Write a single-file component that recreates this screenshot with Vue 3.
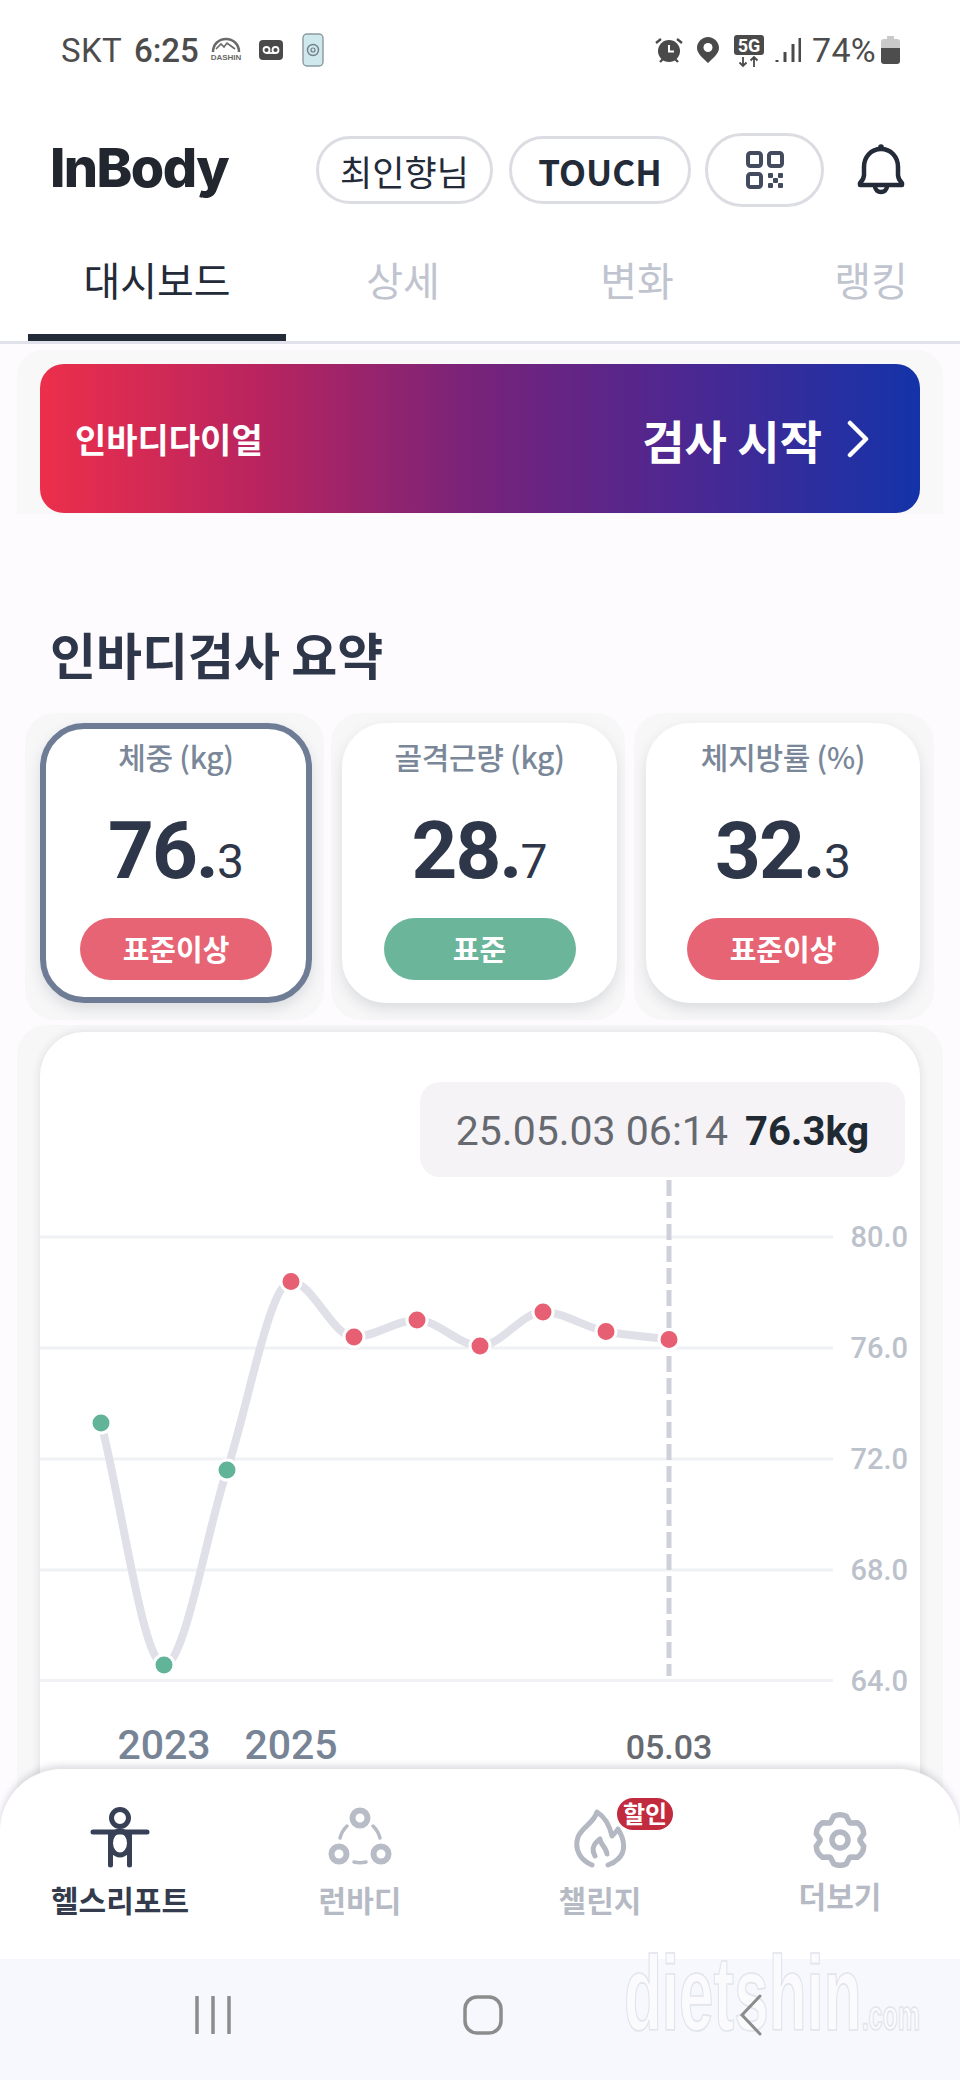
<script setup>
const pts = [
  [101, 1423, 'g'], [164, 1665, 'g'], [227, 1470, 'g'], [291, 1281.5, 'r'], [354, 1337, 'r'],
  [417, 1320, 'r'], [480, 1346, 'r'], [543, 1312, 'r'], [606, 1331.5, 'r'], [669, 1339.5, 'r']
]
function monotone(p) {
  const n = p.length
  const s = []
  for (let i = 0; i < n - 1; i++) s.push((p[i + 1][1] - p[i][1]) / (p[i + 1][0] - p[i][0]))
  const t = [s[0]]
  for (let i = 1; i < n - 1; i++) {
    t.push(s[i - 1] * s[i] <= 0 ? 0 : (2 * s[i - 1] * s[i]) / (s[i - 1] + s[i]))
  }
  t.push(s[n - 2])
  let d = `M${p[0][0]} ${p[0][1]}`
  for (let i = 0; i < n - 1; i++) {
    const h = (p[i + 1][0] - p[i][0]) / 3
    d += ` C${p[i][0] + h} ${p[i][1] + t[i] * h} ${p[i + 1][0] - h} ${p[i + 1][1] - t[i + 1] * h} ${p[i + 1][0]} ${p[i + 1][1]}`
  }
  return d
}
const linePath = monotone(pts)
const grid = [[1237, '80.0'], [1348, '76.0'], [1459, '72.0'], [1570, '68.0'], [1680.5, '64.0']]
const cards = [
  { label: '체중 (kg)', a: '76.', b: '3', state: '표준이상', tone: 'over', on: true },
  { label: '골격근량 (kg)', a: '28.', b: '7', state: '표준', tone: 'ok', on: false },
  { label: '체지방률 (%)', a: '32.', b: '3', state: '표준이상', tone: 'over', on: false }
]
const gear = (() => {
  const cx = 32, cy = 33
  let d = ''
  for (let i = 0; i < 6; i++) {
    const a = (i * 60 - 90) * Math.PI / 180
    const P = (r, o) => {
      const b = a + o * Math.PI / 180
      return `${(cx + r * Math.cos(b)).toFixed(1)} ${(cy + r * Math.sin(b)).toFixed(1)}`
    }
    d += `${i ? 'L' : 'M'}${P(20, -28)} L${P(24.5, -15)} Q${P(27, 0)} ${P(24.5, 15)} L${P(20, 28)} `
  }
  return d + 'Z'
})()
</script>

<template>
  <div class="page">
    <div class="status">
      <span class="carrier">SKT</span>
      <span class="clock">6:25</span>
      <svg class="st-dashin" width="32" height="26" viewBox="0 0 32 26">
        <path d="M3 15C3 7 9 2 16 2s13 5 13 13" fill="none" stroke="#6a6a6a" stroke-width="2.5"/>
        <path d="M6 12l5-5 3 3 3-4 4 3 4 3" fill="none" stroke="#6a6a6a" stroke-width="1.6"/>
        <text x="16" y="23" text-anchor="middle" class="st-dashin-t">DASHIN</text>
      </svg>
      <svg class="st-vm" width="24" height="20" viewBox="0 0 24 20">
        <rect width="24" height="20" rx="4" fill="#4a4a4a"/>
        <circle cx="7.5" cy="10" r="3" fill="none" stroke="#fff" stroke-width="1.8"/>
        <circle cx="16.5" cy="10" r="3" fill="none" stroke="#fff" stroke-width="1.8"/>
        <path d="M7.5 13h9" stroke="#fff" stroke-width="1.8"/>
      </svg>
      <svg class="st-phone" width="22" height="34" viewBox="0 0 22 34">
        <rect x="1" y="1" width="20" height="32" rx="4" fill="#cfe8ee" stroke="#8a9a9e" stroke-width="1.4"/>
        <circle cx="11" cy="17" r="5.5" fill="none" stroke="#6f8186" stroke-width="1.4"/>
        <circle cx="11" cy="17" r="2" fill="none" stroke="#6f8186" stroke-width="1.2"/>
      </svg>
      <span class="st-gap"></span>
      <svg width="28" height="27" viewBox="0 0 28 27">
        <circle cx="14" cy="14" r="11" fill="#4a4a4a"/>
        <path d="M14 8v6.5h5" fill="none" stroke="#fff" stroke-width="2"/>
        <path d="M1 6l5-4M27 6l-5-4M5 25l3-3M23 25l-3-3" stroke="#4a4a4a" stroke-width="2.4"/>
      </svg>
      <svg class="st-pin" width="22" height="26" viewBox="0 0 22 26">
        <path d="M11 0C5 0 0 5 0 11c0 6 7 11 11 15 4-4 11-9 11-15C22 5 17 0 11 0z" fill="#4a4a4a"/>
        <circle cx="11" cy="10.5" r="4.5" fill="#fff"/>
      </svg>
      <svg class="st-5g" width="30" height="33" viewBox="0 0 30 33">
        <rect width="30" height="20" rx="3" fill="#4a4a4a"/>
        <text x="15" y="16.5" text-anchor="middle" class="st-5g-t">5G</text>
        <path d="M9 22v9M5.5 27.5L9 31l3.500-3.500M20 32v-10M16.500 25.500L20 22l3.500 3.500" fill="none" stroke="#4a4a4a" stroke-width="1.8"/>
      </svg>
      <svg class="st-sig" width="26" height="26" viewBox="0 0 26 26">
        <path d="M2 23v2M10 15v10M18 7v18M25 1v24" stroke="#4a4a4a" stroke-width="3"/>
      </svg>
      <span class="batt-text">74%</span>
      <svg class="st-bat" width="19" height="28" viewBox="0 0 19 28">
        <path d="M6 0h7v3h3a3 3 0 0 1 3 3v8H0V6a3 3 0 0 1 3-3h3z" fill="#c9c9c9"/>
        <path d="M0 12h19v13a3 3 0 0 1-3 3H3a3 3 0 0 1-3-3z" fill="#4d4d4d"/>
      </svg>
    </div>

    <header class="head">
      <span class="logo">InBody</span>
      <span class="pill name">최인향님</span>
      <span class="pill touch">TOUCH</span>
      <span class="pill qr">
        <svg width="38" height="38" viewBox="0 0 38 38" fill="none" stroke="#434b5f" stroke-width="4">
          <rect x="2" y="2" width="13" height="13" rx="2.500"/>
          <rect x="23" y="2" width="13" height="13" rx="2.500"/>
          <rect x="2" y="23" width="13" height="13" rx="2.500"/>
          <g fill="#434b5f" stroke="none">
            <rect x="22" y="22" width="5" height="5" rx="1"/><rect x="32" y="22" width="5" height="5" rx="1"/>
            <rect x="27" y="27" width="5" height="5" rx="1"/>
            <rect x="22" y="32" width="5" height="5" rx="1"/><rect x="32" y="32" width="5" height="5" rx="1"/>
          </g>
        </svg>
      </span>
      <svg class="bell" width="48" height="54" viewBox="0 0 48 54" fill="none" stroke="#232b38" stroke-width="4.500" stroke-linecap="round" stroke-linejoin="round">
        <circle cx="24" cy="4" r="2.800" fill="#232b38" stroke="none"/>
        <path d="M7 32V24C7 14 14 6 24 6s17 8 17 18v8c0 3 2 6 4 8v2H3v-2c2-2 4-5 4-8z"/>
        <path d="M18 43c0 4 3 6 6 6s6-2 6-6"/>
      </svg>
    </header>

    <nav class="tabs">
      <span class="tab active">대시보드</span>
      <span class="tab">상세</span>
      <span class="tab">변화</span>
      <span class="tab">랭킹</span>
    </nav>

    <div class="banner-wrap">
      <div class="banner">
        <span class="banner-l">인바디다이얼</span>
        <span class="banner-r">검사 시작</span>
        <svg class="chev" width="24" height="38" viewBox="0 0 24 38">
          <path d="M4 3l16 16L4 35" fill="none" stroke="#fff" stroke-width="4.500" stroke-linecap="round" stroke-linejoin="round"/>
        </svg>
      </div>
    </div>

    <h2 class="title">인바디검사 요약</h2>

    <section class="cards">
      <div v-for="c in cards" :key="c.label" class="halo">
        <div class="card" :class="{ on: c.on }">
          <div class="c-label">{{ c.label }}</div>
          <div class="c-val"><span class="big">{{ c.a }}</span><span class="small">{{ c.b }}</span></div>
          <div class="c-pill" :class="c.tone">{{ c.state }}</div>
        </div>
      </div>
    </section>

    <section class="chart-halo">
      <div class="chart-card">
        <svg class="chart" width="880" height="760" viewBox="40 1032 880 760">
          <g v-for="g in grid" :key="g[1]">
            <line x1="40" :y1="g[0]" x2="833" :y2="g[0]" class="gridline"/>
            <text x="908" :y="g[0] + 10" text-anchor="end" class="ylab">{{ g[1] }}</text>
          </g>
          <line x1="669" y1="1180" x2="669" y2="1676" class="dash"/>
          <path :d="linePath" class="curve"/>
          <circle v-for="p in pts" :key="p[0]" :cx="p[0]" :cy="p[1]" r="10" :class="p[2] === 'g' ? 'dot-g' : 'dot-r'"/>
          <text x="164" y="1759" text-anchor="middle" class="xlab">2023</text>
          <text x="291" y="1759" text-anchor="middle" class="xlab">2025</text>
          <text x="669" y="1759" text-anchor="middle" class="xlab2">05.03</text>
        </svg>
        <div class="tip"><span class="tip-d">25.05.03 06:14</span><b class="tip-v">76.3kg</b></div>
      </div>
    </section>

    <footer class="bottom">
      <div class="bar">
        <div class="nav-i active">
          <svg width="64" height="64" viewBox="0 0 64 64" fill="none" stroke="#374054" stroke-width="5" stroke-linecap="round">
            <circle cx="32" cy="11" r="8.500"/>
            <path d="M5 25H59"/>
            <path d="M22.500 26V58M41.500 26V58"/>
            <ellipse cx="32" cy="36" rx="9.500" ry="12"/>
          </svg>
          <span>헬스리포트</span>
        </div>
        <div class="nav-i">
          <svg width="64" height="64" viewBox="0 0 64 64" fill="none" stroke="#b7bcc6" stroke-linecap="round">
            <circle cx="32" cy="11" r="7.500" stroke-width="6"/>
            <circle cx="11" cy="47" r="7.500" stroke-width="6"/>
            <circle cx="53" cy="47" r="7.500" stroke-width="6"/>
            <path d="M12 31c1-4 3-8 7-12" stroke-width="3.500"/>
            <path d="M52 31c-1-4-3-8-7-12" stroke-width="3.500"/>
            <path d="M26 55c4 1 8 1 12 0" stroke-width="3.500"/>
          </svg>
          <span>런바디</span>
        </div>
        <div class="nav-i">
          <svg width="64" height="64" viewBox="0 0 64 64" fill="none" stroke="#b3b8c2" stroke-width="5" stroke-linecap="round" stroke-linejoin="round">
            <path d="M24 58C12 53 6 42 10 30 14 20 26 16 29 5c8 5 13 15 15 24 3-3 5-5 6-7 7 11 8 23 0 30-3 3-7 5-10 6"/>
            <path d="M27 49c-5-9 1-14 5-17 0 5 6 8 7 15"/>
          </svg>
          <span>챌린지</span>
          <em class="badge">할인</em>
        </div>
        <div class="nav-i more">
          <svg width="64" height="64" viewBox="0 0 64 64" fill="none" stroke="#b3b8c2" stroke-width="5.500" stroke-linejoin="round">
            <path :d="gear"/>
            <circle cx="32" cy="33" r="8"/>
          </svg>
          <span>더보기</span>
        </div>
      </div>
      <div class="sys">
        <svg class="sys-a" width="36" height="38" viewBox="0 0 36 38">
          <path d="M2 1v36M18 1v36M34 1v36" stroke="#8c8c8c" stroke-width="3.500" stroke-linecap="round"/>
        </svg>
        <svg class="sys-b" width="40" height="40" viewBox="0 0 40 40">
          <rect x="2" y="2" width="36" height="36" rx="12" fill="none" stroke="#8c8c8c" stroke-width="3.500"/>
        </svg>
        <svg class="sys-c" width="24" height="42" viewBox="0 0 24 42">
          <path d="M21 2L3 21l18 19" fill="none" stroke="#8c8c8c" stroke-width="3" stroke-linecap="round"/>
        </svg>
      </div>
      <svg class="mark" width="320" height="140" viewBox="0 0 320 140">
        <text transform="translate(2 92) scale(1 1.7)" class="mark-t">dietshin<tspan class="mark-s">.com</tspan></text>
      </svg>
    </footer>
  </div>
</template>

<style>
html, body { margin: 0; background: #fdfbfe; }
</style>

<style scoped>
.page {
  position: relative;
  width: 960px;
  height: 2080px;
  overflow: hidden;
  background: #fdfbfe;
  font-family: Roboto, "Noto Sans CJK KR", sans-serif;
  color: #2e3649;
}
.status {
  height: 100px;
  box-sizing: border-box;
  background: #fff;
  display: flex;
  align-items: center;
  padding: 0 60px 0 61px;
  color: #4c4c4c;
  font-size: 33px;
}
.carrier { letter-spacing: .3px; }
.clock { margin-left: 12px; font-weight: 500; }
.st-dashin { margin-left: 11px; overflow: visible; }
.st-dashin-t { font: 800 8px "Liberation Sans", sans-serif; fill: #6a6a6a; }
.st-vm { margin-left: 17px; }
.st-phone { margin-left: 19px; }
.st-gap { flex: 1; }
.st-pin { margin-left: 14px; }
.st-5g { margin-left: 15px; margin-top: 2px; }
.st-5g-t { font: 700 18px Roboto, sans-serif; fill: #fff; }
.st-sig { margin-left: 11px; }
.batt-text { margin-left: 11px; font-size: 34px; letter-spacing: .3px; }
.st-bat { margin-left: 5px; }

.head {
  height: 136px;
  box-sizing: border-box;
  background: #fff;
  display: flex;
  align-items: center;
  padding: 4px 0 0 50px;
}
.logo {
  width: 177px;
  margin-top: -5px;
  font: 800 54px/1 Inter, sans-serif;
  letter-spacing: -1.6px;
  color: #21262f;
}
.pill {
  box-sizing: border-box;
  display: flex;
  align-items: center;
  justify-content: center;
  height: 68px;
  border: 3px solid #dcdde3;
  border-radius: 34px;
  background: #fff;
  color: #232b38;
}
.name { width: 177px; margin-left: 89px; font: 400 35px "Noto Sans CJK KR", sans-serif; }
.touch { width: 182px; margin-left: 16px; font: 700 35px "Noto Sans CJK KR", sans-serif; }
.qr { width: 119px; height: 74px; border-radius: 37px; margin-left: 14px; }
.bell { margin-left: 33px; }

.tabs {
  height: 108px;
  box-sizing: border-box;
  background: #fff;
  display: flex;
  padding-left: 28px;
  border-bottom: 3px solid #e0e1ea;
  overflow: hidden;
}
.tab {
  flex: 0 0 234px;
  height: 105px;
  box-sizing: border-box;
  padding-top: 9px;
  text-align: center;
  font: 400 40px/68px "Noto Sans CJK KR", sans-serif;
  color: #bfc4cf;
}
.tab.active {
  flex-basis: 258px;
  color: #232b38;
  border-bottom: 7px solid #232b38;
}

.banner-wrap {
  margin: 6px 17px 0;
  padding: 14px 23px 1px;
  background: #f8f8f9;
  border-radius: 26px 26px 0 0;
}
.banner {
  height: 149px;
  border-radius: 24px;
  display: flex;
  align-items: center;
  padding: 0 50px 0 35px;
  color: #fff;
  background: linear-gradient(90deg, #ec2f4b 0%, #b8245f 25%, #76237a 50%, #4f2790 72%, #1433a9 100%);
}
.banner-l { flex: 1; font: 700 34px "Noto Sans CJK KR", sans-serif; }
.banner-r { font: 700 46px "Noto Sans CJK KR", sans-serif; }
.chev { margin-left: 24px; }

.title {
  margin: 109px 0 0 50px;
  height: 90px;
  font: 700 50px/60px "Noto Sans CJK KR", sans-serif;
  color: #2e3649;
}

.cards { display: flex; padding-left: 25px; }
.halo {
  box-sizing: border-box;
  padding: 10px 12px 17px 15px;
  background: #f7f7f8;
  border-radius: 30px;
  width: 299px;
}
.halo:nth-child(2) { width: 294px; margin-left: 7px; padding: 10px 8px 17px 11px; }
.halo:nth-child(3) { width: 300px; margin-left: 9px; padding: 10px 14px 17px 12px; }
.card {
  box-sizing: border-box;
  height: 280px;
  padding-top: 7px;
  border: 6px solid #fff;
  border-radius: 44px;
  background: #fff;
  box-shadow: 0 6px 14px rgba(40, 45, 60, .13);
  display: flex;
  flex-direction: column;
  align-items: center;
}
.card.on { border-color: #6e7d95; }
.c-label { font: 500 30px/40px "Noto Sans CJK KR", sans-serif; color: #7a8798; white-space: nowrap; letter-spacing: -.3px; }
.c-val { height: 100px; margin-top: 25px; line-height: 100px; white-space: nowrap; color: #2e3649; }
.big { font: 700 80px/100px Roboto, sans-serif; letter-spacing: -2px; }
.small { font: 400 48px/100px Roboto, sans-serif; }
.c-pill {
  margin-top: 17px;
  width: 192px;
  height: 62px;
  flex: none;
  border-radius: 31px;
  color: #fff;
  text-align: center;
  font: 700 29px/60px "Noto Sans CJK KR", sans-serif;
}
.over { background: #e76475; }
.ok { background: #6bb59b; }

.chart-halo {
  margin: 5px 17px 0;
  padding: 7px 23px 0;
  background: #f7f7f8;
  border-radius: 30px 30px 0 0;
}
.chart-card {
  position: relative;
  height: 760px;
  background: #fff;
  border-radius: 44px 44px 0 0;
  overflow: hidden;
  box-shadow: 0 0 10px rgba(40, 45, 60, .12);
}
.chart { display: block; }
.gridline { stroke: #f0f1f5; stroke-width: 3; }
.ylab { font: 500 29px Roboto, sans-serif; fill: #bcc2cc; }
.dash { stroke: #cfd1da; stroke-width: 5; stroke-dasharray: 16 6; }
.curve { fill: none; stroke: #dfe0e8; stroke-width: 8; stroke-linecap: round; }
.dot-g { fill: #61b497; stroke: #fff; stroke-width: 3; }
.dot-r { fill: #e65f72; stroke: #fff; stroke-width: 3; }
.xlab { font: 500 41px Roboto, sans-serif; fill: #778496; }
.xlab2 { font: 500 34px Roboto, sans-serif; fill: #666a70; }
.tip {
  position: absolute;
  left: 380px;
  top: 50px;
  width: 485px;
  height: 95px;
  box-sizing: border-box;
  display: flex;
  align-items: center;
  justify-content: center;
  gap: 17px;
  padding-top: 3px;
  background: #f6f3f7;
  border-radius: 20px;
}
.tip-d { color: #666a70; font-size: 41px; }
.tip-v { color: #1f2a33; font-weight: 700; font-size: 40px; }

.bottom {
  position: absolute;
  left: 0;
  right: 0;
  bottom: 0;
}
.bar {
  height: 190px;
  box-sizing: border-box;
  background: #fff;
  border-radius: 62px 62px 0 0;
  box-shadow: 0 -4px 6px rgba(60, 65, 85, .16);
  display: flex;
}
.nav-i {
  position: relative;
  flex: 1;
  display: flex;
  flex-direction: column;
  align-items: center;
  padding-top: 38px;
  color: #b5bac4;
  font: 700 30px/44px "Noto Sans CJK KR", sans-serif;
}
.nav-i.active { color: #333b4d; }
.nav-i span { margin-top: 6px; }
.nav-i.more span { margin-top: 2px; }
.badge {
  position: absolute;
  left: 137px;
  top: 29px;
  width: 56px;
  height: 32px;
  border-radius: 16px;
  background: #c22a3e;
  color: #fff;
  text-align: center;
  font: 700 24px/30px "Noto Sans CJK KR", sans-serif;
}
.sys {
  height: 121px;
  background: #f6f8fd;
  display: flex;
  align-items: center;
  padding: 0 0 10px 195px;
  box-sizing: border-box;
}
.sys-b { margin-left: 232px; }
.sys-c { margin-left: 236px; position: relative; z-index: 1; }
.mark { position: absolute; left: 622px; top: 169px; pointer-events: none; }
.mark-t {
  font: 700 62px "Liberation Sans", sans-serif;
  fill: #fbfbfe;
  stroke: #e2e4ec;
  stroke-width: 1;
}
.mark-s { font-size: 25px; }
</style>
